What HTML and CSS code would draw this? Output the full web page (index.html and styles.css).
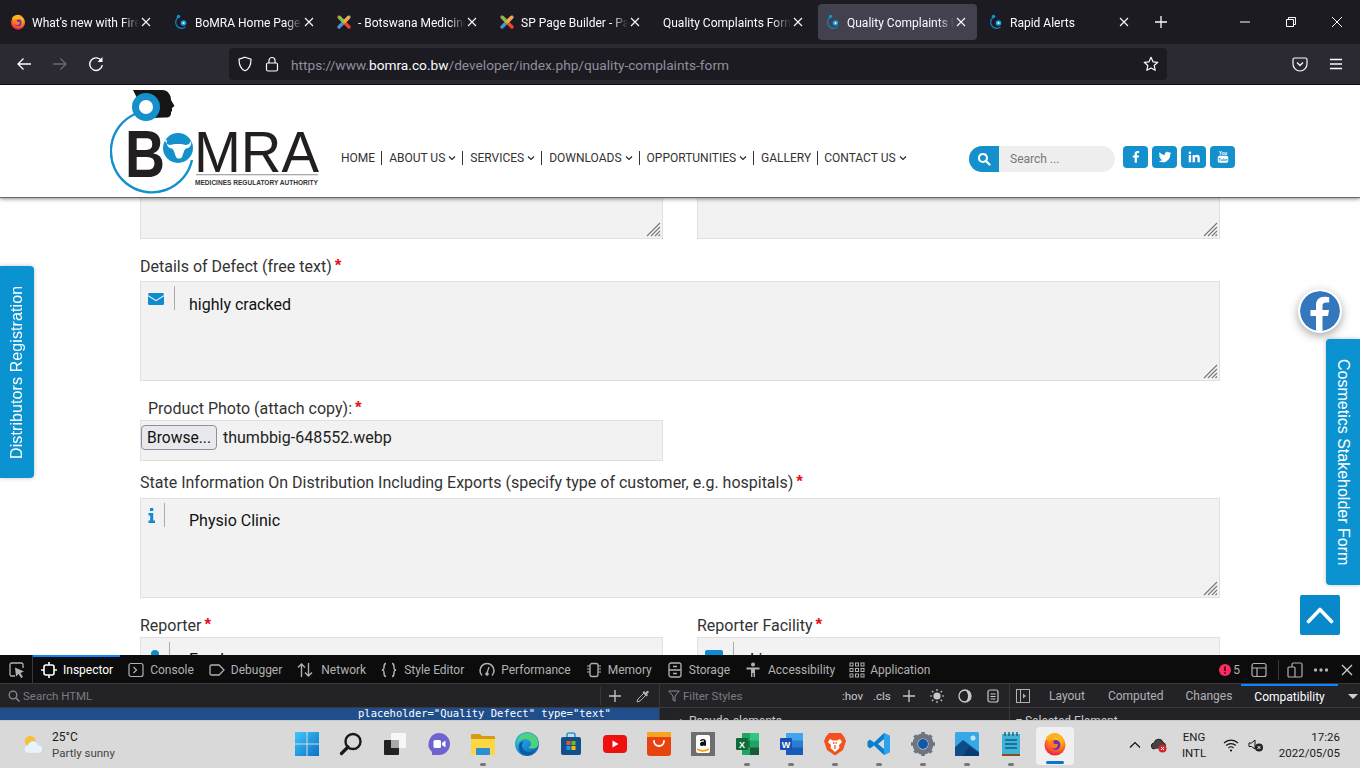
FILE: index.html
```html
<!DOCTYPE html>
<html lang="en">
<head>
<meta charset="utf-8">
<title>Quality Complaints</title>
<link rel="stylesheet" href="styles.css">
</head>
<body>
<svg class="defs" width="0" height="0" aria-hidden="true">
  <defs>
    <radialGradient id="ffg" cx="0.6" cy="0.2" r="0.95"><stop offset="0" stop-color="#ffe226"/><stop offset="0.45" stop-color="#ff8a16"/><stop offset="0.8" stop-color="#f5263f"/><stop offset="1" stop-color="#d6127c"/></radialGradient>
    <linearGradient id="edg" x1="0" y1="0" x2="1" y2="1"><stop offset="0" stop-color="#37c6d0"/><stop offset="0.5" stop-color="#1b8fd8"/><stop offset="1" stop-color="#0c59a4"/></linearGradient>
    <linearGradient id="wing" x1="0" y1="0" x2="1" y2="1"><stop offset="0" stop-color="#3fc6fb"/><stop offset="1" stop-color="#0a72c6"/></linearGradient>
    <symbol id="firefox" viewBox="0 0 24 24">
      <circle cx="12" cy="13" r="10.500" fill="url(#ffg)"/>
      <path d="M3 6c1 1 1.500 2 1.500 3l3-3c3-1 6 0 7 2-3-1-5 .5-5 2 0 1 2 1.500 4 1.500 1 3-2 5-4 4.500 5 3 10-1 9-6-.5-3-2-5-3.500-6.500 3 1 6 4 6.500 8.500C22 6 17 1 12 1 8 1 4.500 3 3 6z" fill="#ffb11b"/>
      <circle cx="12.500" cy="13" r="5" fill="#6b2fb8"/>
      <path d="M7 12c0-3 3-5 6-4.500-2 1-3 2-2.500 3.500 1 1.500 3 1 4.500 1 0 3-2 5-4.500 4.500S7 15 7 12z" fill="#ff7a1a"/>
    </symbol>
    <symbol id="bomra" viewBox="0 0 16 16">
      <path d="M5 3.500a6 6 0 1 0 7.500 9.500" fill="none" stroke="#1680b8" stroke-width="1.300"/>
      <circle cx="5.500" cy="2.500" r="1.800" fill="#1a8fd0"/>
      <circle cx="10.500" cy="9" r="2.800" fill="#17a0e6"/>
      <circle cx="10.500" cy="9" r="1" fill="#fff"/>
    </symbol>
    <symbol id="joomla" viewBox="0 0 16 16">
      <path d="M3 3l10 10" stroke="#f44321" stroke-width="3.400" stroke-linecap="round"/>
      <path d="M13 3L3 13" stroke="#5091cd" stroke-width="3.400" stroke-linecap="round"/>
      <path d="M3.500 3.500l4 4" stroke="#7ac143" stroke-width="3.400" stroke-linecap="round"/>
      <path d="M12.500 3.500l-4 4" stroke="#f9a541" stroke-width="3.400" stroke-linecap="round"/>
    </symbol>
    <symbol id="x" viewBox="0 0 12 12"><path d="M2 2l8 8M10 2l-8 8" fill="none" stroke="currentColor" stroke-width="1.100"/></symbol>
    <symbol id="chev" viewBox="0 0 8 6"><path d="M1 1.500l3 3 3-3" fill="none" stroke="#222" stroke-width="1.100"/></symbol>
    <symbol id="grip" viewBox="0 0 16 16"><path d="M2 15L15 2M6 15L15 6M10 15l5-5M13.500 15l1.500-1.500" stroke="#777" stroke-width="1.100"/></symbol>
    <symbol id="dots9" viewBox="0 0 16 16"><g fill="none" stroke="#b1b1b3"><rect x="1" y="1" width="3" height="3"/><rect x="6.500" y="1" width="3" height="3"/><rect x="12" y="1" width="3" height="3"/><rect x="1" y="6.500" width="3" height="3"/><rect x="6.500" y="6.500" width="3" height="3"/><rect x="12" y="6.500" width="3" height="3"/><rect x="1" y="12" width="3" height="3"/><rect x="6.500" y="12" width="3" height="3"/><rect x="12" y="12" width="3" height="3"/></g></symbol>
  </defs>
</svg>

<div class="window">
  <div class="tabstrip">
    <div class="tab"><svg class="fav"><use href="#firefox"/></svg><span class="tab-t">What's new with Firefox</span><svg class="tab-x"><use href="#x"/></svg></div>
    <div class="tab"><svg class="fav"><use href="#bomra"/></svg><span class="tab-t">BoMRA Home Page</span><svg class="tab-x"><use href="#x"/></svg></div>
    <div class="tab"><svg class="fav"><use href="#joomla"/></svg><span class="tab-t">- Botswana Medicines</span><svg class="tab-x"><use href="#x"/></svg></div>
    <div class="tab"><svg class="fav"><use href="#joomla"/></svg><span class="tab-t">SP Page Builder - Pages</span><svg class="tab-x"><use href="#x"/></svg></div>
    <div class="tab tab-plain"><span class="tab-t">Quality Complaints Form</span><svg class="tab-x"><use href="#x"/></svg></div>
    <div class="tab tab-on"><svg class="fav"><use href="#bomra"/></svg><span class="tab-t">Quality Complaints Form</span><svg class="tab-x"><use href="#x"/></svg></div>
    <div class="tab"><svg class="fav"><use href="#bomra"/></svg><span class="tab-t">Rapid Alerts</span><svg class="tab-x"><use href="#x"/></svg></div>
    <div class="newtab"><svg class="ic16" viewBox="0 0 16 16"><path d="M8 2v12M2 8h12" stroke="#fbfbfe" stroke-width="1.300"/></svg></div>
    <div class="winctl">
      <div class="wbtn"><svg class="ic12" viewBox="0 0 12 12"><path d="M1 6h10" stroke="#fbfbfe"/></svg></div>
      <div class="wbtn"><svg class="ic12" viewBox="0 0 12 12"><path d="M1.500 3.500h7v7h-7zM3.500 3.500v-2h7v7h-2" fill="none" stroke="#fbfbfe"/></svg></div>
      <div class="wbtn"><svg class="ic12" viewBox="0 0 12 12"><path d="M1 1l10 10M11 1L1 11" stroke="#fbfbfe"/></svg></div>
    </div>
  </div>

  <div class="navbar">
    <div class="navbtns">
      <svg class="ic16" viewBox="0 0 16 16"><path d="M15 8H2M7.500 2.500L2 8l5.500 5.500" fill="none" stroke="#fbfbfe" stroke-width="1.300"/></svg>
      <svg class="ic16" viewBox="0 0 16 16"><path d="M1 8h13M8.500 2.500L14 8l-5.500 5.500" fill="none" stroke="#6a6a70" stroke-width="1.300"/></svg>
      <svg class="ic16" viewBox="0 0 16 16"><path d="M13.500 5A6.300 6.300 0 1 0 14.300 9" fill="none" stroke="#fbfbfe" stroke-width="1.400"/><path d="M14.500 1v5h-5z" fill="#fbfbfe"/></svg>
    </div>
    <div class="urlbar">
      <svg class="ic16 u-shield" viewBox="0 0 16 16"><path d="M8 1.200l6 2c0 5-1 9.500-6 11.600C3 12.700 2 8.200 2 3.200z" fill="none" stroke="#fbfbfe" stroke-width="1.200"/></svg>
      <svg class="ic16 u-lock" viewBox="0 0 16 16"><rect x="2.500" y="7" width="11" height="8" rx="1.500" fill="none" stroke="#fbfbfe" stroke-width="1.200"/><path d="M5 7V4.500a3 3 0 0 1 6 0V7" fill="none" stroke="#fbfbfe" stroke-width="1.200"/></svg>
      <span class="url"><span class="url-dim">https://www.</span><span class="url-host">bomra.co.bw</span><span class="url-dim">/developer/index.php/quality-complaints-form</span></span>
      <svg class="ic16 u-star" viewBox="0 0 16 16"><path d="M8 1.300l2 4.500 4.800.5-3.600 3.200 1 4.800L8 12l-4.200 2.300 1-4.800L1.200 6.300 6 5.800z" fill="none" stroke="#fbfbfe" stroke-width="1.200" stroke-linejoin="round"/></svg>
    </div>
    <svg class="ic16 n-pocket" viewBox="0 0 16 16"><path d="M2.500 2h11A1.500 1.500 0 0 1 15 3.500V8a7 7 0 0 1-14 0V3.500A1.500 1.500 0 0 1 2.500 2z" fill="none" stroke="#fbfbfe" stroke-width="1.200"/><path d="M5 6.500l3 3 3-3" fill="none" stroke="#fbfbfe" stroke-width="1.300"/></svg>
    <svg class="ic16 n-menu" viewBox="0 0 16 16"><path d="M2 3.500h12M2 8h12M2 12.500h12" stroke="#fbfbfe" stroke-width="1.300"/></svg>
  </div>

  <div class="page">
    <header class="site-head">
      <svg class="logo" viewBox="110 85 210 112" role="img" aria-label="BoMRA logo">
        <path d="M133 90h29c6 0 9 5 9 10l3.500 6-2.500 2v3l-1 1c.5 4-2 6-6 5.500l-13 .5L140 104z" fill="#161616"/>
        <circle cx="146" cy="107" r="10.500" fill="#fff" stroke="#1490cd" stroke-width="7"/>
        <path d="M135 114A41 41 0 1 0 192 160" fill="none" stroke="#1490cd" stroke-width="2.400"/>
        <text class="logo-b" x="125" y="177" textLength="40" lengthAdjust="spacingAndGlyphs">B</text>
        <text class="logo-m" x="194" y="172" textLength="125" lengthAdjust="spacingAndGlyphs">MRA</text>
        <circle cx="178" cy="148" r="15" fill="#1490cd"/>
        <path d="M165 140c.5 3 2 4.500 5 5 3-1.500 13-1.500 16 0 3-.5 4.500-2 5-5 1 5-1 8-5 8.500l-1.500 1.500-2.500 7c-1 2-5 2-6 0l-2.500-7-1.500-1.500c-4-.5-6-3.500-5-8.500z" fill="#fff"/>
        <rect x="196" y="174" width="122" height="1.300" fill="#aaa"/>
        <text class="logo-s" x="195" y="185" textLength="123" lengthAdjust="spacingAndGlyphs">MEDICINES REGULATORY AUTHORITY</text>
      </svg>
      <nav class="menu">
        <a class="mi">HOME</a>
        <a class="mi">ABOUT US<svg class="mchev"><use href="#chev"/></svg></a>
        <a class="mi">SERVICES<svg class="mchev"><use href="#chev"/></svg></a>
        <a class="mi">DOWNLOADS<svg class="mchev"><use href="#chev"/></svg></a>
        <a class="mi">OPPORTUNITIES<svg class="mchev"><use href="#chev"/></svg></a>
        <a class="mi mi-tight">GALLERY</a>
        <a class="mi mi-last">CONTACT US<svg class="mchev"><use href="#chev"/></svg></a>
      </nav>
      <div class="search">
        <span class="s-btn"><svg class="ic14" viewBox="0 0 16 16"><circle cx="6.800" cy="6.800" r="4.600" fill="none" stroke="#fff" stroke-width="2.400"/><path d="M10.300 10.300l4 4" stroke="#fff" stroke-width="2.600" stroke-linecap="round"/></svg></span>
        <span class="s-in">Search ...</span>
      </div>
      <div class="social">
        <span class="soc"><svg class="ic16" viewBox="0 0 24 24"><path fill="#fff" d="M13.500 22v-9h3.200l.5-3.700h-3.700V7c0-1.100.3-1.800 1.800-1.800h2V1.900C16.900 1.800 15.800 1.700 14.500 1.700c-2.900 0-4.800 1.700-4.800 4.900v2.700H6.500V13h3.200v9z"/></svg></span>
        <span class="soc"><svg class="ic16" viewBox="0 0 24 24"><path fill="#fff" d="M23 5.200c-.8.4-1.700.6-2.600.7.900-.6 1.700-1.400 2-2.500-.9.500-1.900.9-2.900 1.100a4.500 4.500 0 0 0-7.700 4.100A12.800 12.800 0 0 1 2.500 3.900a4.500 4.500 0 0 0 1.400 6c-.7 0-1.400-.2-2-.6 0 2.200 1.500 4.100 3.600 4.500-.7.200-1.300.2-2 .1.600 1.800 2.200 3.100 4.200 3.100A9 9 0 0 1 1 18.900 12.800 12.800 0 0 0 8 21c8.300 0 12.900-7 12.900-13v-.6c.8-.6 1.600-1.300 2.100-2.200z"/></svg></span>
        <span class="soc"><svg class="ic16" viewBox="0 0 24 24"><path fill="#fff" d="M3 8.500h4V21H3zM5 2.500a2.300 2.300 0 1 1 0 4.600 2.300 2.300 0 0 1 0-4.600zM9.500 8.500h3.800v1.700c.6-1 2-2 4-2 4.100 0 4.700 2.700 4.700 6.200V21h-4v-5.800c0-1.400 0-3.200-2-3.200s-2.400 1.500-2.400 3.100V21h-4z"/></svg></span>
        <span class="soc"><svg class="ic16" viewBox="0 0 24 24"><text class="yt-you" x="12" y="8" text-anchor="middle">You</text><rect x="3" y="10" width="18" height="12" rx="3" fill="#fff"/><text class="yt-tube" x="12" y="19" text-anchor="middle">Tube</text></svg></span>
      </div>
    </header>

    <main class="form">
      <div class="two stub-row">
        <div class="box stub"><svg class="grip"><use href="#grip"/></svg></div>
        <div class="box stub"><svg class="grip"><use href="#grip"/></svg></div>
      </div>

      <div class="lbl lbl-a">Details of Defect (free text)<b class="req">*</b></div>
      <div class="box area">
        <span class="addon addon-mail"><svg class="i-mail" viewBox="0 0 16 12"><path d="M0 1.500A1.500 1.500 0 0 1 1.500 0h13A1.500 1.500 0 0 1 16 1.500v.4L8 7 0 1.900z" fill="#0f8bd0"/><path d="M0 3.200l8 5 8-5v7.300a1.500 1.500 0 0 1-1.500 1.500h-13A1.500 1.500 0 0 1 0 10.500z" fill="#0f8bd0"/></svg></span>
        <span class="val">highly cracked</span>
        <svg class="grip"><use href="#grip"/></svg>
      </div>

      <div class="lbl lbl-b">Product Photo (attach copy):<b class="req">*</b></div>
      <div class="half box filebox">
        <button class="browse" type="button">Browse...</button>
        <span class="fname">thumbbig-648552.webp</span>
      </div>

      <div class="lbl lbl-c">State Information On Distribution Including Exports (specify type of customer, e.g. hospitals)<b class="req">*</b></div>
      <div class="box area area-c">
        <span class="addon addon-info"><svg class="i-info" viewBox="0 0 7 15"><path fill="#0f8bd0" d="M2 0h3.200v3H2zM.5 5h4.700v7.500H7V15H.5v-2.500h1.700v-5H.5z"/></svg></span>
        <span class="val">Physio Clinic</span>
        <svg class="grip"><use href="#grip"/></svg>
      </div>

      <div class="two rep-row">
        <div>
          <div class="lbl lbl-r">Reporter<b class="req">*</b></div>
          <div class="box rep">
            <span class="addon addon-user"><svg class="i-user" viewBox="0 0 14 16"><circle cx="7" cy="4" r="4" fill="#0f8bd0"/><path d="M0 16c0-5 3-7 7-7s7 2 7 7z" fill="#0f8bd0"/></svg></span>
            <span class="val val-u">Frank</span>
          </div>
        </div>
        <div>
          <div class="lbl lbl-r">Reporter Facility<b class="req">*</b></div>
          <div class="box rep">
            <span class="addon addon-fac"><svg class="i-fac" viewBox="0 0 18 16"><rect width="18" height="16" rx="2" fill="#0f8bd0"/></svg></span>
            <span class="val val-f">Lira</span>
          </div>
        </div>
      </div>
    </main>

    <a class="side side-l">Distributors Registration</a>
    <a class="side side-r">Cosmetics Stakeholder Form</a>
    <span class="fbfloat"><svg class="fbicon" viewBox="0 0 40 40"><circle cx="20" cy="20" r="20" fill="#3477bd"/><path fill="#fff" d="M22.500 40V25h5.500l1-6h-6.500v-4c0-2 1-3.500 3.500-3.500h3.200V6.200C28 6 26.200 5.800 24.300 5.800c-5 0-8.300 3-8.300 8.500V19h-5.500v6H16v15z"/></svg></span>
    <a class="totop"><svg class="i-up" viewBox="0 0 28 18"><path d="M2.500 15.500L14 3.500l11.500 12" fill="none" stroke="#fff" stroke-width="3.600" stroke-linecap="round" stroke-linejoin="round"/></svg></a>
  </div>

  <div class="devtools">
    <div class="dt-tabs">
      <span class="dt-pick"><svg class="ic16" viewBox="0 0 16 16"><path d="M6 14H2.500A1.500 1.500 0 0 1 1 12.500v-10A1.500 1.500 0 0 1 2.500 1h10A1.500 1.500 0 0 1 14 2.500V6" fill="none" stroke="#b1b1b3" stroke-width="1.300"/><path d="M6 5.500l9 4-3.500 1.500L14 15l-2 1-2.300-4L7 14.500z" fill="#b1b1b3"/></svg></span>
      <span class="dt-tab dt-on"><svg class="ic16" viewBox="0 0 16 16"><rect x="3" y="3" width="10" height="10" rx="2" fill="none" stroke="#fff" stroke-width="1.600"/><path d="M8 0v3M8 13v3M0 8h3M13 8h3" stroke="#fff" stroke-width="1.600"/></svg>Inspector</span>
      <span class="dt-tab"><svg class="ic16" viewBox="0 0 16 16"><rect x="1" y="1.500" width="14" height="13" rx="2" fill="none" stroke="#b1b1b3" stroke-width="1.200"/><path d="M5.500 5l3 3-3 3" fill="none" stroke="#b1b1b3" stroke-width="1.200"/></svg>Console</span>
      <span class="dt-tab"><svg class="ic16" viewBox="0 0 16 16"><path d="M2.500 3h7.500l5 5-5 5H2.500A1.500 1.500 0 0 1 1 11.500v-7A1.500 1.500 0 0 1 2.500 3z" fill="none" stroke="#b1b1b3" stroke-width="1.300"/></svg>Debugger</span>
      <span class="dt-tab dt-g8"><svg class="ic16" viewBox="0 0 16 16"><path d="M4.500 15V2M1 5.500L4.500 2 8 5.500M11.500 1v13M8 10.500l3.500 3.500 3.500-3.500" fill="none" stroke="#b1b1b3" stroke-width="1.400"/></svg>Network</span>
      <span class="dt-tab dt-g7"><svg class="ic16" viewBox="0 0 16 16"><path d="M5 1.500C3 1.500 3 3 3 5s0 2.500-2 3c2 .5 2 1 2 3s0 3.500 2 3.500M11 1.500c2 0 2 1.500 2 3.500s0 2.500 2 3c-2 .5-2 1-2 3s0 3.500-2 3.500" fill="none" stroke="#b1b1b3" stroke-width="1.500"/></svg>Style Editor</span>
      <span class="dt-tab"><svg class="ic16" viewBox="0 0 16 16"><path d="M3 13.500A7 7 0 1 1 13 13.500" fill="none" stroke="#b1b1b3" stroke-width="1.500"/><path d="M8 11l2-6" stroke="#b1b1b3" stroke-width="1.300"/><circle cx="8" cy="12" r="1.800" fill="#b1b1b3"/></svg>Performance</span>
      <span class="dt-tab"><svg class="ic16" viewBox="0 0 16 16"><rect x="4" y="1.500" width="8" height="13" rx="2" fill="none" stroke="#b1b1b3" stroke-width="1.300"/><path d="M1 4h3M1 7h3M1 10h3M12 4h3M12 7h3M12 10h3" stroke="#b1b1b3"/></svg>Memory</span>
      <span class="dt-tab"><svg class="ic16" viewBox="0 0 16 16"><rect x="2" y="1" width="12" height="14" rx="2" fill="none" stroke="#b1b1b3" stroke-width="1.300"/><path d="M2 8h12M6 4.500h4M6 11.500h4" stroke="#b1b1b3" stroke-width="1.300"/></svg>Storage</span>
      <span class="dt-tab dt-g7"><svg class="ic16" viewBox="0 0 16 16"><circle cx="8" cy="2.500" r="2" fill="#b1b1b3"/><path d="M1.500 5.500h13v2H10V15H8.600v-4H7.400v4H6V7.500H1.500z" fill="#b1b1b3"/></svg>Accessibility</span>
      <span class="dt-tab dt-app"><svg class="ic16"><use href="#dots9"/></svg>Application</span>
      <span class="dt-right">
        <svg class="ic12" viewBox="0 0 12 12"><circle cx="6" cy="6" r="6" fill="#ff2a5f"/><path d="M6 2.500v4.500M6 8.300v1.400" stroke="#2a0010" stroke-width="1.500"/></svg><span class="dt-count">5</span>
        <svg class="ic16 dt-layout" viewBox="0 0 16 16"><rect x="1" y="1.500" width="14" height="13" rx="2" fill="none" stroke="#b1b1b3" stroke-width="1.200"/><path d="M1 6h14M6 6v8.500" stroke="#b1b1b3" stroke-width="1.200"/></svg>
        <span class="dt-vsep"></span>
        <svg class="ic16" viewBox="0 0 16 16"><rect x="1" y="5" width="7" height="10" rx="1" fill="none" stroke="#b1b1b3" stroke-width="1.200"/><path d="M5 5V2.500A1.500 1.500 0 0 1 6.500 1h7A1.500 1.500 0 0 1 15 2.500v11a1.500 1.500 0 0 1-1.500 1.500H8" fill="none" stroke="#b1b1b3" stroke-width="1.200"/></svg>
        <svg class="ic16 dt-more" viewBox="0 0 16 16"><circle cx="2.500" cy="8" r="1.700" fill="#b1b1b3"/><circle cx="8" cy="8" r="1.700" fill="#b1b1b3"/><circle cx="13.500" cy="8" r="1.700" fill="#b1b1b3"/></svg>
        <svg class="ic12 dt-close" viewBox="0 0 12 12"><path d="M1 1l10 10M11 1L1 11" stroke="#d0d0d2" stroke-width="1.300"/></svg>
      </span>
    </div>
    <div class="dt-panes">
      <section class="pane pane-html">
        <div class="pane-bar">
          <svg class="ic12" viewBox="0 0 12 12"><circle cx="5" cy="5" r="3.800" fill="none" stroke="#8a8a8f" stroke-width="1.300"/><path d="M8 8l3.500 3.500" stroke="#8a8a8f" stroke-width="1.500"/></svg>
          <span class="pane-ph">Search HTML</span>
          <span class="pane-vsep"></span>
          <svg class="ic14 p-add" viewBox="0 0 14 14"><path d="M7 1v12M1 7h12" stroke="#c8c8ca" stroke-width="1.300"/></svg>
          <svg class="ic14 p-drop" viewBox="0 0 14 14"><path d="M1 13l1-3 6-6 2 2-6 6z" fill="none" stroke="#b1b1b3"/><path d="M8 2l1.500 1.500L11 2c1-1 2.500.5 1.500 1.500L11 5l1 1-1.500 1.500-4-4L7 3z" fill="#b1b1b3"/></svg>
        </div>
        <div class="html-sel">placeholder="Quality Defect" type="text"</div>
      </section>
      <section class="pane pane-css">
        <div class="pane-bar">
          <svg class="ic12" viewBox="0 0 12 12"><path d="M.8 1h10.400L7 6v5.200L5 10V6z" fill="none" stroke="#8a8a8f"/></svg>
          <span class="pane-ph ph-f">Filter Styles</span>
          <span class="css-tool t-hov">:hov</span>
          <span class="css-tool t-cls">.cls</span>
          <svg class="ic14 t-add" viewBox="0 0 14 14"><path d="M7 1v12M1 7h12" stroke="#c8c8ca" stroke-width="1.300"/></svg>
          <svg class="ic14 t-sun" viewBox="0 0 14 14"><circle cx="7" cy="7" r="3.600" fill="#c8c8ca"/><path d="M7 0v2M7 12v2M0 7h2M12 7h2M2 2l1.400 1.400M10.600 10.600L12 12M2 12l1.400-1.400M10.600 3.400L12 2" stroke="#c8c8ca" stroke-width="1.200"/></svg>
          <svg class="ic14 t-moon" viewBox="0 0 14 14"><circle cx="7" cy="7" r="6" fill="none" stroke="#c8c8ca" stroke-width="1.300"/><path d="M7 1a6 6 0 0 1 0 12c2-1.500 3-3.500 3-6s-1-4.500-3-6z" fill="#c8c8ca"/></svg>
          <svg class="ic14 t-doc" viewBox="0 0 14 14"><rect x="2" y="1" width="10" height="12" rx="2" fill="none" stroke="#c8c8ca" stroke-width="1.200"/><path d="M4.500 5h5M4.500 7.500h5M4.500 10h5" stroke="#c8c8ca"/></svg>
        </div>
        <div class="pane-clip"><span class="clip-tri">▸</span> Pseudo-elements</div>
      </section>
      <section class="pane pane-side">
        <div class="pane-bar side-bar">
          <svg class="ic14 s-panel" viewBox="0 0 14 14"><rect x=".5" y=".5" width="13" height="13" fill="none" stroke="#b1b1b3"/><path d="M4.500 .5v13" stroke="#b1b1b3"/><path d="M7 4.500L10 7l-3 2.500z" fill="#b1b1b3"/></svg>
          <span class="s-tab">Layout</span>
          <span class="s-tab s-tight">Computed</span>
          <span class="s-tab">Changes</span>
          <span class="s-tab s-on">Compatibility</span>
          <span class="s-arrow"></span>
        </div>
        <div class="pane-clip clip-s"><span class="clip-tri">▾</span> Selected Element</div>
      </section>
    </div>
  </div>

  <footer class="taskbar">
    <div class="weather">
      <svg class="wx" viewBox="0 0 24 24"><circle cx="9" cy="8" r="6" fill="#f7c236"/><path d="M7 21a4.500 4.500 0 0 1-.5-9A6 6 0 0 1 18 12a4.500 4.500 0 0 1 0 9z" fill="#e9f3fa" stroke="#b8d0e2" stroke-width=".6"/></svg>
      <div class="wx-t"><div class="wx-temp">25°C</div><div class="wx-sum">Partly sunny</div></div>
    </div>
    <div class="apps">
      <span class="app"><svg class="ai" viewBox="0 0 24 24"><path d="M0 0h11.500v11.500H0zM12.500 0H24v11.500H12.500zM0 12.500h11.500V24H0zM12.500 12.500H24V24H12.500z" fill="url(#wing)"/></svg></span>
      <span class="app"><svg class="ai" viewBox="0 0 24 24"><circle cx="14" cy="9.500" r="7.500" fill="none" stroke="#1a1a1a" stroke-width="2.400"/><path d="M9 15l-6.500 6.500" stroke="#1a1a1a" stroke-width="3.200" stroke-linecap="round"/></svg></span>
      <span class="app"><svg class="ai" viewBox="0 0 24 24"><rect x="8" y="1" width="15" height="15" rx="1" fill="#f7f7f7"/><rect x="1" y="8" width="15" height="15" rx="1" fill="#222"/><rect x="8" y="8" width="8" height="8" fill="#a9a9a9"/></svg></span>
      <span class="app"><svg class="ai" viewBox="0 0 24 24"><path d="M12 1a11 11 0 0 1 0 22H5v-3a11 11 0 0 1 7-19z" fill="#6f63d0"/><rect x="6.500" y="8" width="7.500" height="8" rx="1.500" fill="#fff"/><path d="M15 11l3.500-2.500v7L15 13z" fill="#fff"/></svg></span>
      <span class="app dot"><svg class="ai" viewBox="0 0 24 24"><path d="M0 3a1 1 0 0 1 1-1h8l2 2h12a1 1 0 0 1 1 1v3H0z" fill="#d39c14"/><path d="M0 7h24v15a1 1 0 0 1-1 1H1a1 1 0 0 1-1-1z" fill="#fcd745"/><rect x="5" y="16" width="14" height="7" rx="1" fill="#2a8fd0"/></svg></span>
      <span class="app"><svg class="ai" viewBox="0 0 24 24"><circle cx="12" cy="12" r="12" fill="url(#edg)"/><path d="M12 1c6 0 11 4 11.500 10 .3 4-3 5.500-6 5.500-2 0-4-.5-4.500-1 1.500-.5 3-1.500 3-3.500 0-3-3-5-6-5-4 0-7.500 3-8 7C2 6 6 1 12 1z" fill="#52d17c"/><path d="M7 13c0 4 3 7 7 7 2 0 5-1 6-3-2 5-6 7-9 6.500C6 23 3 18 4 13c1-3 3-4 5-4-1 1-2 2.500-2 4z" fill="#0c59a4"/></svg></span>
      <span class="app"><svg class="ai" viewBox="0 0 24 24"><path d="M8 6V3a2 2 0 0 1 2-2h4a2 2 0 0 1 2 2v3" fill="none" stroke="#1d9fd8" stroke-width="1.600"/><rect x="2" y="5" width="20" height="18" rx="2" fill="#12508c"/><rect x="7.500" y="9" width="4" height="4" fill="#f25022"/><rect x="12.500" y="9" width="4" height="4" fill="#7fba00"/><rect x="7.500" y="14" width="4" height="4" fill="#00a4ef"/><rect x="12.500" y="14" width="4" height="4" fill="#ffb900"/></svg></span>
      <span class="app"><svg class="ai" viewBox="0 0 24 24"><rect y="3" width="24" height="18" rx="4" fill="#ee0f0f"/><path d="M9.500 8.500v7l6-3.500z" fill="#fff"/></svg></span>
      <span class="app"><svg class="ai" viewBox="0 0 24 24"><rect width="24" height="24" rx="3" fill="#e8420e"/><rect width="24" height="5" fill="#f5a623"/><path d="M7 9a5 5 0 0 0 10 0" fill="none" stroke="#fff" stroke-width="1.800" stroke-linecap="round"/></svg></span>
      <span class="app"><svg class="ai" viewBox="0 0 24 24"><rect width="24" height="24" fill="#6e6e6e"/><rect x="5" y="3" width="14" height="18" rx="2" fill="#fff"/><path d="M12 7c-2 0-3 1-3 2h2c0-.5.5-.7 1-.7 1 0 1 .7 1 1.200-2.500 0-4 .8-4 2.500 0 1.500 1 2 2 2s1.700-.4 2-1v.8h2V10c0-2-1-3-3-3z" fill="#111"/><path d="M6 17c4 2.500 8 2.500 12 0" fill="none" stroke="#f90" stroke-width="1.500"/></svg></span>
      <span class="app dot"><svg class="ai" viewBox="0 0 24 24"><rect x="7" y="1" width="17" height="22" rx="1" fill="#21a366"/><rect x="15" y="1" width="9" height="7.500" fill="#33c481"/><rect x="7" y="8.500" width="8" height="7" fill="#107c41"/><rect x="15" y="15.500" width="9" height="7.500" fill="#185c37"/><rect x="1" y="6" width="12" height="12" rx="1" fill="#0f6b3a"/><text class="ai-x" x="7" y="15.500" text-anchor="middle">X</text></svg></span>
      <span class="app dot"><svg class="ai" viewBox="0 0 24 24"><rect x="7" y="1" width="17" height="22" rx="1" fill="#2b7cd3"/><rect x="7" y="1" width="17" height="7.500" fill="#41a5ee"/><rect x="7" y="15.500" width="17" height="7.500" fill="#185abd"/><rect x="1" y="6" width="12" height="12" rx="1" fill="#1a4fb0"/><text class="ai-x" x="7" y="15.500" text-anchor="middle">W</text></svg></span>
      <span class="app dot"><svg class="ai" viewBox="0 0 24 24"><path d="M6 1h12l3 3.500L23 9l-3 9-8 5.500L4 18 1 9l2-4.500z" fill="#f4511e"/><path d="M7 7l3 1.500h4L17 7l2 3-3 3 .5 3L12 20l-4.500-4 .5-3-3-3z" fill="#fff"/><path d="M10 11h1.500M12.500 11H14M12 13v4" stroke="#f4511e" stroke-width="1.300"/></svg></span>
      <span class="app dot"><svg class="ai" viewBox="0 0 24 24"><path d="M17 1l6 3v16l-6 3L7 13.500l-4 3-2.500-2V9.500L3 7.500l4 3z" fill="#0a7fd0"/><path d="M17 7l-6 5 6 5z" fill="#d8d8d8"/><path d="M17 1l6 3v16l-6 3z" fill="#2aa3ec"/></svg></span>
      <span class="app dot"><svg class="ai" viewBox="0 0 24 24"><circle cx="12" cy="12" r="8" fill="none" stroke="#6d7680" stroke-width="5"/><path d="M12 0v4M12 20v4M0 12h4M20 12h4M3.500 3.500l3 3M17.500 17.500l3 3M3.500 20.500l3-3M17.500 6.500l3-3" stroke="#6d7680" stroke-width="3.600"/><circle cx="12" cy="12" r="5" fill="#1058a8"/></svg></span>
      <span class="app dot"><svg class="ai" viewBox="0 0 24 24"><rect width="24" height="24" rx="1.500" fill="#37a8e6"/><path d="M0 24V15l8-7 16 12v4z" fill="#0f4c8a"/><path d="M8 24l6-9 10 6v3z" fill="#0a3a74"/><circle cx="18" cy="6" r="2.500" fill="#bfe7fb"/></svg></span>
      <span class="app dot"><svg class="ai" viewBox="0 0 24 24"><rect x="3" y="2" width="18" height="20" fill="#3fb4d8"/><path d="M6 0v4M10 0v4M14 0v4M18 0v4" stroke="#17607c" stroke-width="1.400"/><path d="M6 8h12M6 12h12M6 16h12" stroke="#0f5f82" stroke-width="1.600"/><rect x="3" y="22" width="18" height="2" fill="#8a4b1d"/></svg></span>
      <span class="app app-on"><svg class="ai" viewBox="0 0 24 24"><use href="#firefox"/></svg></span>
    </div>
    <div class="tray">
      <span class="t-i t-chev"><svg class="ic12" viewBox="0 0 12 12"><path d="M1 8.500L6 3.500l5 5" fill="none" stroke="#111" stroke-width="1.200"/></svg></span>
      <span class="t-i t-cloud"><svg class="ic16" viewBox="0 0 16 16"><path d="M3.500 12a3 3 0 0 1-.3-6A4.500 4.500 0 0 1 12 5.500 3 3 0 0 1 13 11" fill="#444" stroke="#222"/><circle cx="11.500" cy="11.500" r="4" fill="#d9262c"/><path d="M10 10l3 3M13 10l-3 3" stroke="#fff"/></svg></span>
      <span class="t-i t-lang"><span>ENG</span><span>INTL</span></span>
      <span class="t-i t-wifi"><svg class="ic16" viewBox="0 0 16 16"><path d="M1 6a10 10 0 0 1 14 0M3.200 8.500a7 7 0 0 1 9.600 0M5.500 11a3.600 3.600 0 0 1 5 0" fill="none" stroke="#111" stroke-width="1.100"/><circle cx="8" cy="13.500" r="1.100" fill="#111"/></svg></span>
      <span class="t-i t-spk"><svg class="ic16" viewBox="0 0 16 16"><path d="M1 6h2.500L7 3v9L3.500 9.500H1z" fill="none" stroke="#111"/><circle cx="11" cy="10.500" r="4" fill="#222"/><path d="M9.500 9l3 3M12.500 9l-3 3" stroke="#fff"/></svg></span>
      <span class="t-clock"><span>17:26</span><span>2022/05/05</span></span>
    </div>
  </footer>
</div>
</body>
</html>
```
FILE: styles.css
```css
* { box-sizing: border-box; }
html, body { margin: 0; padding: 0; }
body { font-family: Roboto, "Liberation Sans", sans-serif; overflow: hidden; }
.defs { position: absolute; }
svg { display: block; flex: none; }
.ic12 { width: 12px; height: 12px; }
.ic14 { width: 14px; height: 14px; }
.ic16 { width: 16px; height: 16px; }
.window { width: 1360px; height: 768px; display: flex; flex-direction: column; overflow: hidden; }

/* tab strip */
.tabstrip { height: 44px; background: #1c1b22; display: flex; padding-left: 1px; padding-top: 4px; flex: none; }
.tab { width: 159px; height: 36px; margin: 0 2px; display: flex; align-items: center; padding-left: 7px; color: #fbfbfe; font-size: 12px; border-radius: 4px; position: relative; }
.tab-on { background: #42414d; }
.tab-plain { padding-left: 8px; }
.fav { width: 16px; height: 16px; margin-right: 6px; }
.tab-t { width: 107px; padding-top: 2px; white-space: nowrap; overflow: hidden; -webkit-mask-image: linear-gradient(90deg, #000 85%, transparent); mask-image: linear-gradient(90deg, #000 85%, transparent); }
.tab-plain .tab-t { width: 128px; }
.tab-x { width: 12px; height: 12px; margin-left: auto; margin-right: 10px; color: #fbfbfe; }
.newtab { width: 38px; height: 36px; display: flex; align-items: center; justify-content: center; }
.winctl { margin-left: auto; display: flex; margin-top: -4px; }
.wbtn { width: 46px; height: 44px; display: flex; align-items: center; justify-content: center; }

/* nav bar */
.navbar { height: 41px; background: #2b2a33; border-bottom: 1px solid #0c0c0d; display: flex; align-items: center; flex: none; padding-left: 16px; }
.navbtns { display: flex; gap: 20px; width: 213px; }
.urlbar { width: 938px; height: 32px; background: #1c1b22; border-radius: 4px; display: flex; align-items: center; padding-left: 8px; }
.u-lock { margin-left: 11px; }
.url { margin-left: 11px; padding-top: 1px; font-size: 13.7px; white-space: nowrap; }
.url-dim { color: #8f8f9d; }
.url-host { color: #fbfbfe; }
.u-star { margin-left: auto; margin-right: 8px; }
.n-pocket { margin-left: 125px; }
.n-menu { margin-left: 20px; }

/* page */
.page { height: 570px; position: relative; overflow: hidden; background: #fff; flex: none; }
.site-head { height: 113px; background: #fff; display: flex; align-items: flex-start; padding-left: 110px; position: relative; z-index: 2; border-bottom: 1px solid #666; box-shadow: 0 1px 4px rgba(0, 0, 0, .45); }
.logo { width: 210px; height: 112px; }
.logo-b { font: 700 66px "Liberation Sans", sans-serif; fill: #231f20; }
.logo-m { font: 400 58px "Liberation Sans", sans-serif; fill: #231f20; }
.logo-s { font: 700 7px "Liberation Sans", sans-serif; fill: #333; }
.menu { width: 628px; margin-left: 21px; margin-top: 65px; display: flex; height: 16px; align-items: center; font-size: 12px; color: #333; }
.mi { display: flex; align-items: center; gap: 3px; padding-right: 6px; margin-right: 7px; border-right: 1px solid #333; height: 14px; white-space: nowrap; }
.mi-tight { margin-right: 6px; }
.mi-last { border-right: 0; }
.mchev { width: 8px; height: 6px; }
.search { width: 146px; height: 26px; margin-top: 61px; border-radius: 13px; background: #eee; display: flex; overflow: hidden; }
.s-btn { width: 30px; background: #1490cd; display: flex; align-items: center; justify-content: center; }
.s-in { padding-left: 11px; font-size: 12px; color: #777; line-height: 26px; }
.social { display: flex; gap: 4px; margin-left: 8px; margin-top: 61px; }
.soc { width: 25px; height: 22px; background: #1490cd; border-radius: 4px; display: flex; align-items: center; justify-content: center; }
.soc .ic16 { width: 14px; height: 14px; }
.yt-you { font: 700 8px "Liberation Sans", sans-serif; fill: #fff; }
.yt-tube { font: 700 7px "Liberation Sans", sans-serif; fill: #1490cd; }

/* form */
.form { width: 1080px; margin-left: 140px; font-size: 16px; color: #333; }
.two { display: grid; grid-template-columns: 523px 523px; column-gap: 34px; }
.box { background: #f2f2f2; border: 1px solid #e0e0e0; position: relative; }
.stub-row { height: 41px; }
.stub { border-top: 0; }
.area { height: 100px; display: flex; align-items: flex-start; }
.half { width: 523px; }
.lbl { height: 24px; line-height: 26px; display: flex; white-space: nowrap; }
.lbl-a { margin-top: 15px; margin-bottom: 3px; }
.lbl-b { margin-top: 15px; padding-left: 8px; }
.lbl-c { margin-top: 9px; margin-bottom: 4px; }
.lbl-r { margin-bottom: 0; }
.rep-row { margin-top: 15px; }
.req { color: #e8101b; font: 700 17px/24px "Liberation Sans", sans-serif; margin-left: 3px; }
.grip { position: absolute; right: 1px; bottom: 1px; width: 16px; height: 16px; }
.addon { display: block; height: 24px; border-right: 1px solid #aaa; margin-top: 4px; flex: none; padding-left: 7px; }
.addon-mail { width: 34px; }
.addon-info { width: 24px; }
.addon-user { width: 29px; }
.addon-fac { width: 36px; }
.i-mail { width: 16px; height: 12px; margin-top: 7px; }
.i-info { width: 7px; height: 15px; margin-top: 5px; margin-left: 0; }
.i-user { width: 14px; height: 16px; margin-top: 8px; }
.i-fac { width: 18px; height: 16px; margin-top: 8px; }
.val { color: #111; line-height: 24px; margin-top: 11px; margin-left: 14px; white-space: nowrap; }
.area-c .val { margin-left: 24px; margin-top: 10px; }
.rep { height: 60px; display: flex; align-items: flex-start; }
.val-u { margin-left: 19px; margin-top: 10px; }
.val-f { margin-left: 16px; margin-top: 10px; }
.filebox { height: 41px; display: flex; align-items: center; padding-bottom: 7px; margin-top: 0; }
.browse { width: 76px; height: 25px; padding: 1px 0 0; font: 15.6px Roboto, sans-serif; color: #111; background: #e9e9ed; border: 1px solid #8f8f9d; border-radius: 4px; margin-left: 0; }
.fname { margin-left: 6px; color: #222; }

/* floating page widgets */
.side { position: absolute; z-index: 3; background: #0b93d1; color: #fff; font: 16px "Liberation Sans", sans-serif; width: 34px; display: flex; align-items: center; justify-content: center; box-shadow: 0 0 4px rgba(0, 0, 0, .25); white-space: nowrap; }
.side-l { left: 0; top: 181px; height: 212px; writing-mode: vertical-rl; transform: rotate(180deg); border-radius: 4px 0 0 4px; letter-spacing: .1px; }
.side-r { right: 0; top: 254px; height: 246px; writing-mode: vertical-rl; border-radius: 4px 0 0 4px; }
.fbfloat { position: absolute; z-index: 3; left: 1298px; top: 204px; width: 44px; height: 44px; border-radius: 50%; background: #fff; padding: 2px; box-shadow: 0 3px 10px rgba(0, 0, 0, .35); }
.fbicon { width: 40px; height: 40px; border-radius: 50%; }
.totop { position: absolute; z-index: 3; left: 1300px; top: 510px; width: 40px; height: 40px; background: #0889cc; border-radius: 2px; display: flex; align-items: center; justify-content: center; }
.i-up { width: 28px; height: 18px; }

/* devtools */
.devtools { height: 65px; background: #232327; flex: none; color: #b1b1b3; font-size: 12px; overflow: hidden; }
.dt-tabs { height: 29px; background: #0c0c0d; border-bottom: 1px solid #38383d; display: flex; align-items: center; position: relative; }
.dt-pick { width: 33px; height: 28px; padding: 7px 0 0 9px; border-right: 1px solid #38383d; }
.dt-tab { display: flex; align-items: center; gap: 6px; padding: 2px 7px 0 8px; height: 28px; white-space: nowrap; }
.dt-g7 { gap: 7px; }
.dt-g8 { gap: 8px; }
.dt-app { gap: 5px; margin-left: -1px; }
.dt-on { color: #fff; border-top: 2px solid #0a84ff; background: #0c0c0d; padding-top: 0; }
.dt-right { position: absolute; right: 7px; top: 1px; height: 28px; display: flex; align-items: center; }
.dt-count { margin-left: 2px; }
.dt-layout { margin-left: 11px; }
.dt-vsep { width: 1px; height: 20px; background: #38383d; margin: 0 8px 0 11px; }
.dt-more { margin-left: 10px; }
.dt-close { margin-left: 12px; }
.dt-panes { display: flex; height: 36px; }
.pane { border-right: 1px solid #38383d; overflow: hidden; flex: none; }
.pane-html { width: 660px; }
.pane-css { width: 350px; }
.pane-side { flex: 1; border-right: 0; }
.pane-bar { height: 24px; border-bottom: 1px solid #38383d; display: flex; align-items: center; padding-left: 8px; position: relative; }
.pane-ph { color: #7b7b80; margin-left: 3px; font-size: 11.5px; }
.ph-f { margin-left: 3px; }
.pane-vsep { position: absolute; left: 600px; top: 3px; width: 1px; height: 18px; background: #38383d; }
.p-add { position: absolute; left: 608px; top: 5px; }
.p-drop { position: absolute; left: 636px; top: 5px; }
.html-sel { height: 12px; background: #204e8a; color: #fff; font: 10.5px/11px "DejaVu Sans Mono", monospace; padding-left: 358px; white-space: nowrap; }
.css-tool { position: absolute; top: 5px; color: #c8c8ca; font-size: 11.5px; }
.t-hov { left: 182px; }
.t-cls { left: 213px; }
.t-add { position: absolute; left: 242px; top: 5px; }
.t-sun { position: absolute; left: 270px; top: 5px; }
.t-moon { position: absolute; left: 298px; top: 5px; }
.t-doc { position: absolute; left: 326px; top: 5px; }
.pane-clip { padding: 6px 0 0 20px; font-size: 12px; line-height: 14px; white-space: nowrap; color: #c8c8ca; }
.clip-s { padding-left: 6px; }
.side-bar { padding-left: 6px; padding-right: 0; }
.s-panel { margin-right: 19px; }
.s-tab { margin-right: 23px; color: #b1b1b3; white-space: nowrap; }
.s-tight { margin-right: 22px; }
.s-on { color: #fff; margin: 0; padding: 0 13px; height: 24px; line-height: 22px; border-top: 2px solid #0a84ff; margin-left: -14px; }
.s-arrow { position: absolute; right: 2px; top: 10px; width: 0; height: 0; border: 5px solid transparent; border-top-color: #d0d0d2; border-bottom: 0; }

/* taskbar */
.taskbar { height: 48px; background: #d9d9d9; border-top: 1px solid #c8c8c8; display: flex; flex: none; color: #1a1a1a; }
.weather { width: 285px; padding-left: 22px; display: flex; align-items: center; gap: 8px; flex: none; }
.wx { width: 22px; height: 22px; }
.wx-temp { font-size: 12px; line-height: 16px; }
.wx-sum { font-size: 11.5px; line-height: 16px; color: #444; }
.apps { display: flex; flex: none; }
.app { width: 44px; height: 47px; display: flex; align-items: center; justify-content: center; position: relative; padding-bottom: 2px; }
.ai { width: 24px; height: 24px; }
.ai-x { font: 700 9px "Liberation Sans", sans-serif; fill: #fff; }
.dot::after { content: ""; position: absolute; left: 19px; bottom: 2px; width: 6px; height: 3px; border-radius: 2px; background: #777; }
.app-on { width: 38px; height: 38px; margin: 6px 3px 0; padding: 0 0 4px; background: #f0f0f0; border-radius: 4px; }
.app-on::after { content: ""; position: absolute; left: 10px; bottom: 1px; width: 18px; height: 3px; border-radius: 2px; background: #0a74d0; }
.tray { margin-left: 47px; flex: 1; display: flex; align-items: center; padding-right: 20px; font-size: 12px; }
.t-i { display: flex; align-items: center; justify-content: center; flex: none; }
.t-chev { width: 22px; }
.t-cloud { width: 26px; }
.t-lang { width: 44px; flex-direction: column; line-height: 16px; font-size: 11.5px; }
.t-wifi { width: 30px; }
.t-spk { width: 20px; }
.t-clock { margin-left: auto; display: flex; flex-direction: column; align-items: flex-end; line-height: 16px; font-size: 11.5px; }
```
